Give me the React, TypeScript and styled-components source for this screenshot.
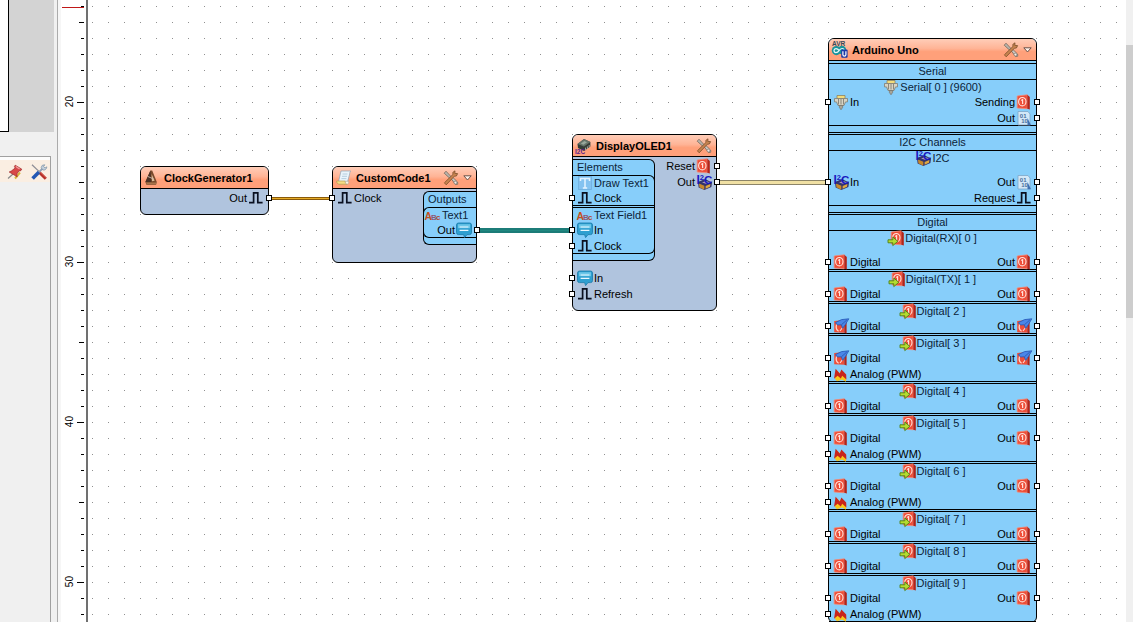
import React from "react";
import styled, { createGlobalStyle, css } from "styled-components";

const GlobalStyle = createGlobalStyle`
  * { box-sizing: border-box; }
  body {
    margin: 0;
    background: #f0f0f0;
    color: #000;
    font-family: "Liberation Sans", Arial, sans-serif;
    font-size: 11px;
    line-height: 14px;
  }
`;

/* ---------- Icons ---------- */

const Glyph = styled.svg`
  width: 16px;
  height: 16px;
  flex: none;
  display: block;
  overflow: visible;
`;

const RedPlate = () => (
  <>
    <path d="M1.2 2 11.3 0.8 11.3 14.8 1.2 14Z" fill="#ee4e38" stroke="#f48a76" strokeWidth="0.8" />
    <path d="M11.3 0.8 13.8 3 13.8 15.6 11.3 14.8Z" fill="#b52418" />
    <ellipse cx="6.3" cy="7.7" rx="3.7" ry="4.2" fill="none" stroke="#ffe1da" strokeWidth="1.1" />
    <path d="M5.2 6.4 6.6 5.5V10" fill="none" stroke="#ffe1da" strokeWidth="1.2" />
  </>
);

type IconName =
  | "pulse" | "bubble" | "abc" | "text" | "digital" | "digitalIn" | "interrupt" | "analog"
  | "i2c" | "binary" | "plug" | "metronome" | "script" | "chip" | "arduino" | "tools"
  | "pin" | "toolsBlue";

const drawings: Record<IconName, React.ReactNode> = {
  pulse: <path d="M1 12.6H5.6V2.8H9.8V12.6H14.6" fill="none" stroke="#0a1020" strokeWidth="1.7" />,
  bubble: (
    <>
      <path d="M2.5 1h11a2 2 0 0 1 2 2v7.6a2 2 0 0 1-2 2H11l-2.4 3-1-3H2.5a2 2 0 0 1-2-2V3a2 2 0 0 1 2-2Z" fill="#2e9fd0" stroke="#1878a8" strokeWidth="0.8" />
      <path d="M2 2.2h12v4H2Z" fill="#6cc6e8" />
      <path d="M3.6 5h8.8M3.6 8.4h8.8" stroke="#e9f8ff" strokeWidth="1.2" />
    </>
  ),
  abc: (
    <g fontFamily="Liberation Sans, sans-serif" fontWeight="bold">
      <text x="-0.6" y="12.5" fontSize="10.5" fill="#c4501c">A</text>
      <text x="6" y="12.5" fontSize="8" fill="#8a5a78">B</text>
      <text x="11" y="12.5" fontSize="8" fill="#b0472c">c</text>
    </g>
  ),
  text: (
    <>
      <rect x="1.5" y="1.5" width="13" height="13" fill="#84c2f0" stroke="#6faede" strokeWidth="0.8" />
      <path d="M3.5 6V3.5h9V6M8 3.5v9.5M5.8 13h4.4" fill="none" stroke="#e4f3ff" strokeWidth="1.5" />
    </>
  ),
  digital: <RedPlate />,
  digitalIn: (
    <>
      <g transform="translate(2 0)"><RedPlate /></g>
      <path d="M0 9.8H4.8V7L9.8 11.3 4.8 15.6V12.8H0Z" fill="#b4dc30" stroke="#4c7f14" strokeWidth="0.9" />
    </>
  ),
  interrupt: (
    <>
      <path d="M1.2 3 11.3 2 11.3 14.8 1.2 14.3Z" fill="#ee4e38" />
      <path d="M11.3 2 13.6 4V15.6L11.3 14.8Z" fill="#b52418" />
      <path d="M3.6 6.2C2.8 9 3.4 12 5.6 13.2M9.6 9.5 7 13" fill="none" stroke="#ffd5cc" strokeWidth="1.2" />
      <path d="M2.4 4.6 8.6 1.6 15.8 0.8 12.6 6.2 9.6 10.4 8.4 6.8 4.4 7Z" fill="#4a86e8" stroke="#2456b4" strokeWidth="0.8" />
      <path d="M8.6 6.6 13.8 2" stroke="#1f4ca4" strokeWidth="0.7" />
    </>
  ),
  analog: (
    <>
      <path d="M2 13 3 3.5 6.5 7 8.5 4.5 13 9V15.8L9 13.5 4 15.2Z" fill="#f8c81c" />
      <path d="M1 12.8 2.6 2.8 6.8 7.4 8.4 3.4 13.2 8.6 13.4 13.4 9.2 9.8 7.8 12.6 4.6 9.8Z" fill="#c8241c" />
    </>
  ),
  i2c: (
    <>
      <path d="M2 8 9 5 16 8.4 15.4 13 8.4 16 2.6 13.4Z" fill="#34346c" />
      <path d="M3 9.4 8.4 11.8 8.2 15.8 3.4 13.2Z" fill="#c8892a" />
      <path d="M9.6 12 14.4 10 14 12.8 9.6 14.8Z" fill="#e0a840" />
      <path d="M6 8.6 10 9.8 14 8.4 10.4 7Z" fill="#a8a0b8" />
      <g fontFamily="Liberation Sans, sans-serif" fontWeight="bold" fill="#1818c0">
        <text x="0.4" y="9.6" fontSize="12">I</text>
        <text x="3.8" y="6" fontSize="7.5">2</text>
        <text x="8" y="9.6" fontSize="11.5">C</text>
      </g>
    </>
  ),
  binary: (
    <>
      <path d="M2 1.5H12L14 4V15H2Z" fill="#d3e8f8" stroke="#7ea6c8" strokeWidth="0.8" />
      <g fontFamily="Liberation Sans, sans-serif" fontWeight="bold" fontSize="6" fill="#4c6f9c">
        <text x="3.8" y="7.6">01</text>
        <text x="5.2" y="13.4">10</text>
      </g>
      <path d="M11.5 8 15 15.3H11.5Z" fill="#3f6fb0" />
    </>
  ),
  plug: (
    <>
      <path d="M4 1.5h8v3H4Z" fill="#f3dc7c" stroke="#8f8460" strokeWidth="0.8" />
      <path d="M1.5 4.5h13v3.4h-2L11 11.5H5L3.5 7.9h-2Z" fill="#d8d4c4" stroke="#807c70" strokeWidth="0.8" />
      <path d="M5.5 5v5.5M8 5v5.5M10.5 5v5.5" stroke="#77736a" strokeWidth="0.8" />
      <path d="M6.4 11.5h3.2v2L8 15.8 6.4 13.5Z" fill="#a8a498" stroke="#6e6a60" strokeWidth="0.6" />
    </>
  ),
  metronome: (
    <>
      <path d="M6.4 0.5h1.8l4.6 11.5-.8 2.8H2.4L1.4 12Z" fill="#7a4a2c" />
      <path d="M6.4 0.5 7.4 12 1.4 12Z" fill="#4a3024" />
      <path d="M7.6 4 10.6 10.8 8 11.2Z" fill="#dcbc9a" />
      <path d="M2 12.4h10.4v1.8H2.8Z" fill="#a8744a" />
      <path d="M3.6 6.4 9.6 9" stroke="#d0c0b2" strokeWidth="0.9" />
    </>
  ),
  script: (
    <>
      <path d="M5 1h9.8c-1.2 1.2-1 2-1.4 4L11.5 12H2.5Z" fill="#eaf4fb" stroke="#8fa4b4" strokeWidth="0.7" />
      <path d="M6.5 4h5M6 6.3h5M5.4 8.6h5" stroke="#a8c4d8" strokeWidth="0.8" />
      <path d="M0.6 11h8.6c0 2 1 3 2.2 3.2H3C1.4 14 0.6 12.6 0.6 11Z" fill="#f4dc84" stroke="#b49c50" strokeWidth="0.7" />
      <path d="M11.4 14.2c1.2-.4 1.6-1.6 1.2-3H9.2c0 2 1 3 2.2 3Z" fill="#f8f4e4" stroke="#a8a090" strokeWidth="0.6" />
    </>
  ),
  chip: (
    <>
      <path d="M1.5 6 8 1 14.4 4 14.4 8.4 8 13 2 10Z" fill="#343c36" />
      <path d="M1.5 6 8 1 14.4 4 8 8.6Z" fill="#66746a" />
      <path d="M4.8 5.6 8.4 3 11 4.2 7.4 6.8Z" fill="#98a89c" />
      <path d="M9.5 9.6v2.4M11.4 8.4v2.4M13.2 7v2.4" stroke="#b8bcb8" strokeWidth="0.8" />
      <text x="-1" y="15.8" fontFamily="Liberation Sans, sans-serif" fontWeight="bold" fontSize="6.5" fill="#5c1c8c">I2C</text>
    </>
  ),
  arduino: (
    <>
      <text x="0" y="4.4" fontFamily="Liberation Sans, sans-serif" fontWeight="bold" fontSize="6.5" fill="#3a4a58">AVR</text>
      <circle cx="4.4" cy="8.6" r="4.6" fill="#18949c" />
      <circle cx="10" cy="8" r="4.2" fill="#18949c" />
      <path d="M7 8.4C5.4 5.8 2 6 2 8.6s3.4 2.6 5 0S12 5.8 12 8.2" fill="none" stroke="#e8fafa" strokeWidth="1.2" />
      <rect x="9.2" y="7.4" width="6.4" height="8.4" rx="1" fill="#1c38a8" />
      <path d="M10.9 9.2v3.6c0 1.7 3 1.7 3 0V9.2" fill="none" stroke="#fff" strokeWidth="1.2" />
    </>
  ),
  tools: (
    <>
      <path d="M1.2 3.2 3 1.2 9.2 7.8 7.8 9.2Z" fill="#b8b4ac" stroke="#6c5c50" strokeWidth="0.7" />
      <path d="M8.2 8.8 9.8 7.4 14.6 12 14.8 14.2 12.6 14.6Z" fill="#c8c4bc" stroke="#6c6058" strokeWidth="0.7" />
      <path d="M1.4 12.8 10 4.4 9.8 2.4 12 0.8 11.8 3.4 14.6 3.6 13.4 6 11.4 6.2 3.2 14.8Z" fill="#c88450" stroke="#7a4c28" strokeWidth="0.8" />
      <circle cx="12.4" cy="12.6" r="1.4" fill="#f4ece8" stroke="#807870" strokeWidth="0.7" />
    </>
  ),
  pin: (
    <>
      <path d="M1 14.5 6 10" stroke="#888" strokeWidth="1.2" />
      <path d="M8 14.5 13 8.5" stroke="#d8b83c" strokeWidth="2" />
      <path d="M8.2 1.2 14.8 5.2 13.4 7 12 6.8 9.8 10 10.2 12.8 2.2 8 4.6 6.8 8.2 4 7.4 2.6Z" fill="#d84848" stroke="#9c2828" strokeWidth="0.7" />
      <path d="M8.8 2.6 12.6 5" stroke="#f4a0a0" strokeWidth="1.2" />
    </>
  ),
  toolsBlue: (
    <>
      <path d="M1 0.8 9 8.4" stroke="#8c8c94" strokeWidth="1.2" />
      <path d="M8.2 8.2 14.8 14.8" stroke="#b83028" strokeWidth="3" />
      <path d="M8.8 7.4 15 13.4" stroke="#e88878" strokeWidth="0.7" />
      <path d="M1.6 14.4 8 8" stroke="#2458b4" strokeWidth="3.6" />
      <path d="M8 8.2 11.4 4.6" stroke="#8ca0b8" strokeWidth="1.8" />
      <path d="M10.2 3.6a3.2 3.2 0 0 1 3.6-2.8L12.6 2.6 14 4l1.8-1.2a3.2 3.2 0 0 1-4 3.2Z" fill="#c4d0dc" stroke="#7c90a4" strokeWidth="0.7" />
    </>
  ),
};

const Icon = ({ name }: { name: IconName }) => (
  <Glyph viewBox="0 0 16 16" aria-hidden="true">{drawings[name]}</Glyph>
);

/* ---------- Window frame ---------- */

const Window = styled.main`
  display: flex;
  height: 100vh;
  overflow: hidden;
  background: #f0f0f0;
`;

const Sidebar = styled.aside`
  flex: none;
  width: 58px;
  display: flex;
  flex-direction: column;
  padding-right: 3px;
  border-right: 1px solid #ababab;
`;

const Overview = styled.div`
  height: 132px;
  margin-bottom: 24px;
  background: #d3d3d3;
`;

const OverviewPage = styled.div`
  width: 9px;
  height: 100%;
  background: #fff;
  border: solid #000;
  border-width: 0 1px 1px 0;
`;

const ToolPanel = styled.section`
  flex: 1;
  margin-right: 3px;
  border: solid #a0a0a0;
  border-width: 1px 1px 0 0;
`;

const ToolBar = styled.div`
  display: flex;
  justify-content: flex-end;
  gap: 8px;
  height: 25px;
  padding: 4px 3px 2px 0;
  border-top: 3px solid #fcfcfc;
  background: #faeee2;
`;

const IconButton = styled.button`
  display: flex;
  flex: none;
  padding: 0;
  border: 0;
  background: none;
`;

const Ruler = styled.div`
  position: relative;
  flex: none;
  width: 30px;
  padding-right: 2px;
  overflow: hidden;
  background: #fff;
  border-left: 3px solid #f6f6f6;
  border-right: 2px solid #707070;
`;

const Scale = styled.ol`
  margin: -2px 0 0;
  padding: 0;
  list-style: none;
`;

const Step = styled.li`
  display: flex;
  align-items: center;
  justify-content: flex-end;
  gap: 2px;
  height: 16px;
`;

const StepLabel = styled.span`
  writing-mode: vertical-rl;
  transform: rotate(180deg);
  font-size: 10px;
  line-height: 10px;
`;

const Tick = styled.span<{ $size: number }>`
  width: ${(p) => p.$size}px;
  height: 1px;
  background: #000;
`;

const Cursor = styled.div`
  position: absolute;
  top: 7px;
  left: 1px;
  right: 2px;
  height: 1px;
  background: #c01818;
`;

const ScrollTrack = styled.div`
  flex: none;
  width: 7px;
  padding-top: 45px;
  background: #f0f0f0;
`;

const ScrollThumb = styled.div`
  height: 273px;
  background: #cdcdcd;
`;

/* ---------- Diagram ---------- */

const Canvas = styled.section`
  position: relative;
  flex: 1;
  overflow: hidden;
  background: #fff;
`;

const Wires = styled.svg`
  position: absolute;
  inset: 0;
  width: 100%;
  height: 100%;
`;

const Node = styled.article<{ $x: number; $y: number; $width: number; $fill?: string }>`
  position: absolute;
  left: ${(p) => p.$x}px;
  top: ${(p) => p.$y}px;
  width: ${(p) => p.$width}px;
  border: 1px solid #000;
  border-radius: 6px;
  background: ${(p) => p.$fill ?? "#b0c4de"};
`;

const NodeHeader = styled.header`
  display: flex;
  align-items: center;
  gap: 4px;
  height: 22px;
  padding: 1px 4px 0 3px;
  border-bottom: 1px solid #000;
  border-radius: 5px 5px 0 0;
  background: linear-gradient(#ffcdb8, #ffb496 45%, #ffa07a 60%, #ffa07a);
`;

const NodeTitle = styled.h2`
  flex: 1;
  margin: 0;
  font-size: 11px;
  line-height: 14px;
  white-space: nowrap;
`;

const Chevron = styled.svg`
  width: 9px;
  height: 6px;
`;

const NodeBody = styled.div<{ $bottom?: number }>`
  padding-bottom: ${(p) => p.$bottom ?? 0}px;
`;

const Columns = styled.div`
  display: flex;
  justify-content: space-between;
`;

const Column = styled.div`
  flex: 1;
`;

const LowerPorts = styled.div`
  padding-top: 8px;
`;

const Row = styled.div`
  position: relative;
  display: flex;
  justify-content: space-between;
  height: 16px;
  padding: 2px 4px 0;
`;

const PortLabel = styled.span<{ $side: "in" | "out" }>`
  display: flex;
  align-items: center;
  flex-direction: ${(p) => (p.$side === "in" ? "row" : "row-reverse")};
  gap: 1px;
  height: 14px;
  margin-left: ${(p) => (p.$side === "out" ? "auto" : "0")};
  white-space: nowrap;
`;

const Socket = styled.i<{ $side: "in" | "out" }>`
  position: absolute;
  top: 6px;
  ${(p) => (p.$side === "in" ? "left" : "right")}: -4px;
  width: 6px;
  height: 6px;
  border: 1px solid #000;
  background: #fff;
`;

const GroupHeader = styled.h3<{ $centered?: boolean }>`
  height: 15px;
  margin: 0;
  padding: ${(p) => (p.$centered ? "0" : "0 2px 0 4px")};
  text-align: ${(p) => (p.$centered ? "center" : "left")};
  font-size: 11px;
  font-weight: normal;
  line-height: 14px;
  color: #0c2338;
`;

const ItemTitle = styled.h4<{ $align?: "center" | "start" | "indent" }>`
  display: flex;
  align-items: center;
  justify-content: ${(p) => (p.$align === "center" ? "center" : "flex-start")};
  gap: 1px;
  height: 13px;
  margin: 0;
  padding-left: ${(p) => (p.$align === "indent" ? 4 : p.$align === "start" ? 1 : 0)}px;
  font-size: 11px;
  font-weight: normal;
  white-space: nowrap;
  color: #0c2338;
`;

const Item = styled.div<{ $spaced?: boolean }>`
  & + & { border-top: 3px double #000; }
  ${(p) => p.$spaced && css`
    ${ItemTitle} { margin-bottom: 9px; }
  `}
`;

const Panel = styled.section<{ $side: "in" | "out"; $width: number }>`
  flex: none;
  width: ${(p) => p.$width}px;
  margin-top: 2px;
  padding-bottom: 6px;
  border: 1px solid #000;
  background: #87cefa;
  ${(p) => p.$side === "in"
    ? "border-left: 0; border-radius: 0 6px 6px 0;"
    : "border-right: 0; border-radius: 6px 0 0 6px;"}
`;

const PanelItems = styled.div<{ $side: "in" | "out" }>`
  margin-${(p) => (p.$side === "in" ? "right" : "left")}: -1px;
  border: 1px solid #000;
  ${(p) => p.$side === "in"
    ? "border-left: 0; border-radius: 0 6px 6px 0;"
    : "border-right: 0; border-radius: 6px 0 0 6px;"}
`;

const Section = styled.section`
  padding-bottom: 6px;
  border-top: 3px double #000;
  &:first-child { margin-top: 2px; border-top: 1px solid #000; }
  &:last-child { padding-bottom: 0; }
`;

const SectionItems = styled.div`
  border: solid #000;
  border-width: 1px 0;
`;

type PortInfo = { icon: IconName; label: string };

const PortRow = ({ input, output }: { input?: PortInfo; output?: PortInfo }) => (
  <Row>
    {input && (
      <PortLabel $side="in"><Icon name={input.icon} />{input.label}</PortLabel>
    )}
    {output && (
      <PortLabel $side="out"><Icon name={output.icon} />{output.label}</PortLabel>
    )}
    {input && <Socket $side="in" />}
    {output && <Socket $side="out" />}
  </Row>
);

const Header = ({ icon, title, tools, menu }: {
  icon: IconName; title: string; tools?: boolean; menu?: boolean;
}) => (
  <NodeHeader>
    <Icon name={icon} />
    <NodeTitle>{title}</NodeTitle>
    {tools && (
      <IconButton type="button" aria-label={`Configure ${title}`}><Icon name="tools" /></IconButton>
    )}
    {menu && (
      <IconButton type="button" aria-label={`${title} menu`}>
        <Chevron viewBox="0 0 9 6"><path d="M0.8 0.8H8.2L4.5 5Z" fill="#fff3ec" stroke="#6c5248" /></Chevron>
      </IconButton>
    )}
  </NodeHeader>
);

type Pin = { name: string; icon?: IconName; analog?: boolean };

const pins: Pin[] = [
  { name: "Digital(RX)[ 0 ]" },
  { name: "Digital(TX)[ 1 ]" },
  { name: "Digital[ 2 ]", icon: "interrupt" },
  { name: "Digital[ 3 ]", icon: "interrupt", analog: true },
  { name: "Digital[ 4 ]" },
  { name: "Digital[ 5 ]", analog: true },
  { name: "Digital[ 6 ]", analog: true },
  { name: "Digital[ 7 ]" },
  { name: "Digital[ 8 ]" },
  { name: "Digital[ 9 ]", analog: true },
];

const steps = Array.from({ length: 40 }, (_, i) => 14 + i);

export default function App() {
  return (
    <>
      <GlobalStyle />
      <Window>
        <Sidebar>
          <Overview><OverviewPage /></Overview>
          <ToolPanel>
            <ToolBar>
              <IconButton type="button" aria-label="Pin panel"><Icon name="pin" /></IconButton>
              <IconButton type="button" aria-label="Options"><Icon name="toolsBlue" /></IconButton>
            </ToolBar>
          </ToolPanel>
        </Sidebar>

        <Ruler>
          <Scale>
            {steps.map((n) => (
              <Step key={n}>
                {n % 10 === 0 && <StepLabel>{n}</StepLabel>}
                <Tick $size={n % 10 === 0 ? 7 : n % 5 === 0 ? 5 : 3} />
              </Step>
            ))}
          </Scale>
          <Cursor />
        </Ruler>

        <Canvas>
          <Wires aria-hidden="true">
            <defs>
              <pattern id="grid" width="16" height="16" patternUnits="userSpaceOnUse">
                <rect x="4" y="6" width="1" height="1" fill="#909090" />
              </pattern>
            </defs>
            <rect width="100%" height="100%" fill="url(#grid)" />
            <path d="M181 198.5H244" stroke="#8a5a08" strokeWidth="3" />
            <path d="M181 198.5H244" stroke="#e6ac28" strokeWidth="1" />
            <path d="M389 230.5H484" stroke="#1c7c78" strokeWidth="5" />
            <path d="M389 230.5H484" stroke="#208880" strokeWidth="1" />
            <path d="M629 182.5H740" stroke="#8c8468" strokeWidth="5" />
            <path d="M629 182.5H740" stroke="#f0e0a4" strokeWidth="3" />
          </Wires>

          <Node $x={52} $y={166} $width={129}>
            <Header icon="metronome" title="ClockGenerator1" />
            <NodeBody $bottom={9}>
              <PortRow output={{ icon: "pulse", label: "Out" }} />
            </NodeBody>
          </Node>

          <Node $x={244} $y={166} $width={145}>
            <Header icon="script" title="CustomCode1" tools menu />
            <NodeBody $bottom={17}>
              <Columns>
                <Column>
                  <PortRow input={{ icon: "pulse", label: "Clock" }} />
                </Column>
                <Panel $side="out" $width={53}>
                  <GroupHeader>Outputs</GroupHeader>
                  <PanelItems $side="out">
                    <Item>
                      <ItemTitle $align="start"><Icon name="abc" />Text1</ItemTitle>
                      <PortRow output={{ icon: "bubble", label: "Out" }} />
                    </Item>
                  </PanelItems>
                </Panel>
              </Columns>
            </NodeBody>
          </Node>

          <Node $x={484} $y={134} $width={145}>
            <Header icon="chip" title="DisplayOLED1" tools />
            <NodeBody $bottom={9}>
              <Columns>
                <Panel $side="in" $width={82}>
                  <GroupHeader>Elements</GroupHeader>
                  <PanelItems $side="in">
                    <Item>
                      <ItemTitle $align="indent"><Icon name="text" />Draw Text1</ItemTitle>
                      <PortRow input={{ icon: "pulse", label: "Clock" }} />
                    </Item>
                    <Item>
                      <ItemTitle $align="indent"><Icon name="abc" />Text Field1</ItemTitle>
                      <PortRow input={{ icon: "bubble", label: "In" }} />
                      <PortRow input={{ icon: "pulse", label: "Clock" }} />
                    </Item>
                  </PanelItems>
                </Panel>
                <Column>
                  <PortRow output={{ icon: "digital", label: "Reset" }} />
                  <PortRow output={{ icon: "i2c", label: "Out" }} />
                </Column>
              </Columns>
              <LowerPorts>
                <PortRow input={{ icon: "bubble", label: "In" }} />
                <PortRow input={{ icon: "pulse", label: "Refresh" }} />
              </LowerPorts>
            </NodeBody>
          </Node>

          <Node $x={740} $y={38} $width={209} $fill="#87cefa">
            <Header icon="arduino" title="Arduino Uno" tools menu />
            <NodeBody>
              <Section>
                <GroupHeader $centered>Serial</GroupHeader>
                <SectionItems>
                  <Item>
                    <ItemTitle $align="center"><Icon name="plug" />Serial[ 0 ] (9600)</ItemTitle>
                    <PortRow input={{ icon: "plug", label: "In" }} output={{ icon: "digital", label: "Sending" }} />
                    <PortRow output={{ icon: "binary", label: "Out" }} />
                  </Item>
                </SectionItems>
              </Section>
              <Section>
                <GroupHeader $centered>I2C Channels</GroupHeader>
                <SectionItems>
                  <Item $spaced>
                    <ItemTitle $align="center"><Icon name="i2c" />I2C</ItemTitle>
                    <PortRow input={{ icon: "i2c", label: "In" }} output={{ icon: "binary", label: "Out" }} />
                    <PortRow output={{ icon: "pulse", label: "Request" }} />
                  </Item>
                </SectionItems>
              </Section>
              <Section>
                <GroupHeader $centered>Digital</GroupHeader>
                <SectionItems>
                  {pins.map((pin, i) => (
                    <Item key={pin.name} $spaced={i === 0}>
                      <ItemTitle $align="center"><Icon name="digitalIn" />{pin.name}</ItemTitle>
                      <PortRow
                        input={{ icon: pin.icon ?? "digital", label: "Digital" }}
                        output={{ icon: pin.icon ?? "digital", label: "Out" }}
                      />
                      {pin.analog && <PortRow input={{ icon: "analog", label: "Analog (PWM)" }} />}
                    </Item>
                  ))}
                </SectionItems>
              </Section>
            </NodeBody>
          </Node>
        </Canvas>

        <ScrollTrack><ScrollThumb /></ScrollTrack>
      </Window>
    </>
  );
}
